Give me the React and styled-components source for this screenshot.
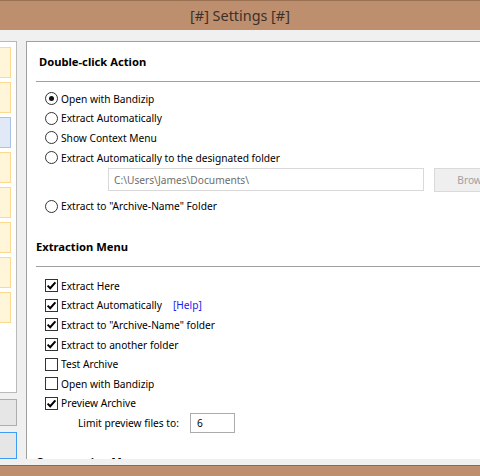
import React from "react"
import styled, { createGlobalStyle } from "styled-components"

const GlobalStyle = createGlobalStyle`
  *, *::before, *::after {
    box-sizing: border-box;
  }
  html, body {
    margin: 0;
    padding: 0;
    background: #f0f0f0;
  }
  body {
    font-family: "Noto Sans", "Segoe UI", sans-serif;
    font-size: 10.2px;
    color: #000;
  }
`

const Window = styled.div`
  width: 480px;
  height: 476px;
  overflow: hidden;
  display: flex;
  flex-direction: column;
  background: #f0f0f0;
`

const TitleBar = styled.div`
  flex-shrink: 0;
  height: 30px;
  border-top: 1px solid #9a7052;
  background: #bd8f6f;
  display: flex;
  align-items: center;
  justify-content: center;
  font-size: 14.4px;
  color: #3b3029;
`

const BottomBar = styled.div`
  flex-shrink: 0;
  height: 11px;
  border-top: 1px solid #8f694d;
  background: #bd8f6f;
`

const Body = styled.div`
  flex: 1;
  min-height: 0;
  display: flex;
  padding: 11px 0 6px;
`

const Sidebar = styled.div`
  flex-shrink: 0;
  width: 17px;
  display: flex;
  flex-direction: column;
`

const ListPanel = styled.div`
  height: 352px;
  background: #fff;
  border: 1px solid #b9b9b9;
  border-left: none;
  padding: 5px 5px 0 0;
  display: flex;
  flex-direction: column;
  gap: 4px;
`

const ListItem = styled.div`
  height: 31px;
  flex-shrink: 0;
  border: 1px solid ${p => (p.selected ? "#a8c2ea" : "#fcd98f")};
  border-left: none;
  background: ${p => (p.selected ? "#e1e9f6" : "#fff5d9")};
`

const SideButton = styled.div`
  margin-top: 6px;
  height: 27px;
  border: 1px solid ${p => (p.focused ? "#3c9bf5" : "#adadad")};
  border-left: none;
  background: #e6e6e6;
`

const ContentPanel = styled.div`
  flex-shrink: 0;
  width: 620px;
  margin-left: 9px;
  background: #fff;
  border-top: 1px solid #a0a0a0;
  border-left: 1px solid #a0a0a0;
  overflow: hidden;
  padding-left: 9px;
`

const SectionHeading = styled.div`
  height: 40px;
  display: flex;
  align-items: center;
  padding-left: ${p => p.indent || 0}px;
  margin-top: ${p => p.gap || 0}px;
  border-bottom: 1px solid #a0a0a0;
  font-weight: 700;
  font-size: 11.2px;
`

const OptionList = styled.div`
  padding: ${p => p.top}px 0 0 9px;
  display: flex;
  flex-direction: column;
`

const OptionRow = styled.label`
  height: 19.6px;
  display: flex;
  align-items: center;
  gap: 3px;
  white-space: nowrap;
`

const Radio = styled.span`
  width: 13px;
  height: 13px;
  border-radius: 50%;
  border: 1px solid #333;
  background: #fff;
  display: flex;
  align-items: center;
  justify-content: center;
  &::after {
    content: "";
    width: 5px;
    height: 5px;
    border-radius: 50%;
    background: ${p => (p.checked ? "#111" : "transparent")};
  }
`

const Box = styled.span`
  width: 13px;
  height: 13px;
  border: 1px solid #333;
  background: #fff;
  display: flex;
  align-items: center;
  justify-content: center;
`

const HelpLink = styled.span`
  margin-left: 8px;
  color: #1c1cf0;
`

const FolderRow = styled.div`
  display: flex;
  gap: 10px;
  margin: 1px 0 4px 63px;
`

const PathField = styled.div`
  width: 316px;
  height: 23px;
  border: 1px solid #d9d9d9;
  background: #fff;
  color: #6d6d6d;
  display: flex;
  align-items: center;
  padding-left: 5px;
`

const BrowseButton = styled.div`
  flex-shrink: 0;
  width: 90px;
  height: 24px;
  border: 1px solid #d9d9d9;
  background: #efefef;
  color: #a0a0a0;
  display: flex;
  align-items: center;
  justify-content: center;
`

const LimitRow = styled.div`
  display: flex;
  align-items: center;
  gap: 11px;
  margin: 0 0 0 33px;
  height: 20px;
`

const NumberField = styled.div`
  width: 45px;
  height: 20px;
  border: 1px solid #ababab;
  display: flex;
  align-items: center;
  padding-left: 6px;
`

const Check = () => (
  <svg width="11" height="11" viewBox="0 0 11 11">
    <path d="M1.6 5.6 L4.2 8.2 L9.4 2.4" fill="none" stroke="#000" strokeWidth="2" />
  </svg>
)

const radios = [
  { label: "Open with Bandizip", checked: true },
  { label: "Extract Automatically" },
  { label: "Show Context Menu" },
  { label: "Extract Automatically to the designated folder" },
]

const menuItems = [
  { label: "Extract Here", checked: true },
  { label: "Extract Automatically", checked: true, help: true },
  { label: 'Extract to "Archive-Name" folder', checked: true },
  { label: "Extract to another folder", checked: true },
  { label: "Test Archive" },
  { label: "Open with Bandizip" },
  { label: "Preview Archive", checked: true },
]

const App = () => {
  return (
    <Window>
      <GlobalStyle />
      <TitleBar>[#] Settings [#]</TitleBar>
      <Body>
        <Sidebar>
          <ListPanel>
            {[0, 1, 2, 3, 4, 5, 6, 7].map(i => (
              <ListItem key={i} selected={i === 2} />
            ))}
          </ListPanel>
          <SideButton />
          <SideButton focused />
        </Sidebar>
        <ContentPanel>
          <SectionHeading indent={3}>Double-click Action</SectionHeading>
          <OptionList top={7}>
            {radios.map(r => (
              <OptionRow key={r.label}>
                <Radio checked={r.checked} />
                {r.label}
              </OptionRow>
            ))}
            <FolderRow>
              <PathField>C:\Users\James\Documents\</PathField>
              <BrowseButton>Browse...</BrowseButton>
            </FolderRow>
            <OptionRow>
              <Radio />
              Extract to "Archive-Name" Folder
            </OptionRow>
          </OptionList>
          <SectionHeading gap={11}>Extraction Menu</SectionHeading>
          <OptionList top={9}>
            {menuItems.map(m => (
              <OptionRow key={m.label}>
                <Box>{m.checked && <Check />}</Box>
                {m.label}
                {m.help && <HelpLink>[Help]</HelpLink>}
              </OptionRow>
            ))}
            <LimitRow>
              Limit preview files to:
              <NumberField>6</NumberField>
            </LimitRow>
          </OptionList>
          <SectionHeading gap={9}>Compression Menu</SectionHeading>
        </ContentPanel>
      </Body>
      <BottomBar />
    </Window>
  )
}

export default App
